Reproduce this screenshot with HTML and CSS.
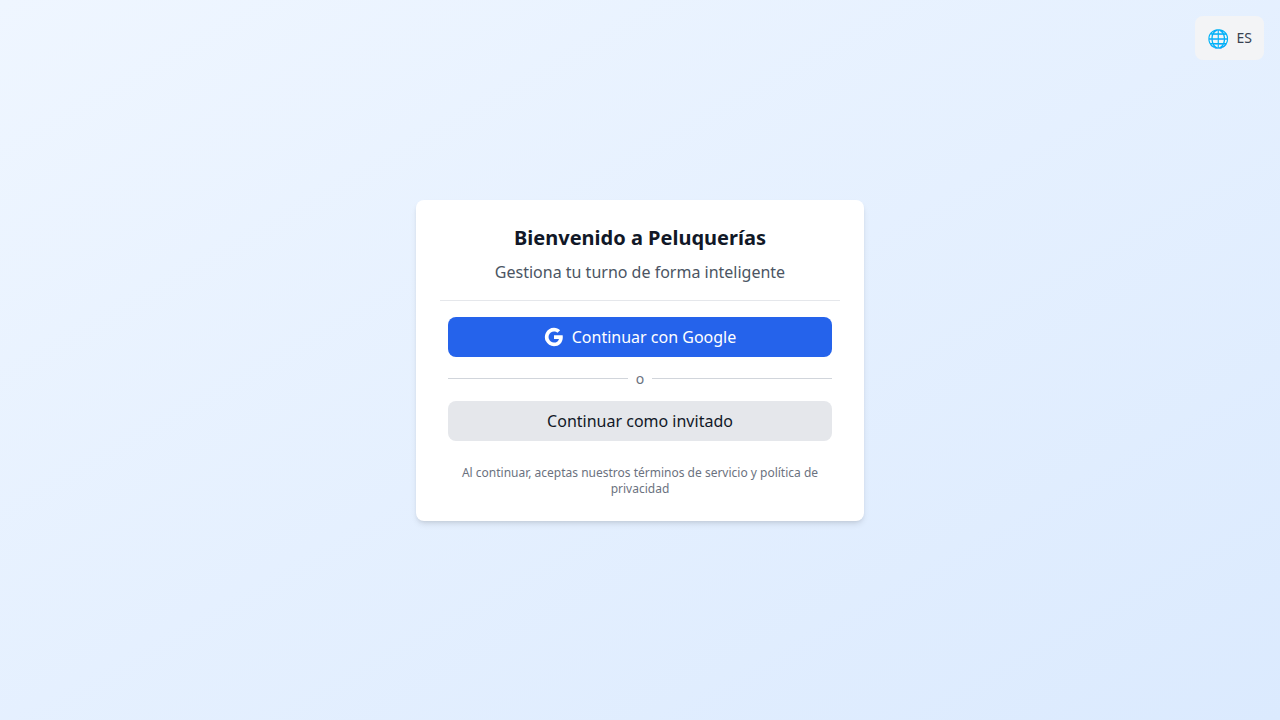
FILE: index.html
```html
<!DOCTYPE html>
<html lang="es">
<head>
<meta charset="utf-8">
<meta name="viewport" content="width=device-width, initial-scale=1">
<title>Peluquerías</title>
<link rel="stylesheet" href="styles.css">
</head>
<body>
<button class="language" type="button" aria-label="Idioma: ES"><span class="language-icon">🌐</span><span>ES</span></button>
<main class="page">
  <section class="card">
    <header class="card-header">
      <h1 class="title">Bienvenido a Peluquerías</h1>
      <p class="subtitle">Gestiona tu turno de forma inteligente</p>
    </header>
    <div class="actions">
      <button class="button button-primary" type="button">
        <svg class="google" viewBox="0 0 24 24" fill="currentColor" aria-hidden="true">
          <path d="M22.56 12.25c0-.78-.07-1.53-.2-2.25H12v4.26h5.92c-.26 1.37-1.04 2.53-2.21 3.31v2.77h3.57c2.08-1.92 3.28-4.74 3.28-8.09z"/>
          <path d="M12 23c2.97 0 5.46-.98 7.28-2.66l-3.57-2.77c-.98.66-2.23 1.06-3.71 1.06-2.86 0-5.29-1.93-6.16-4.53H2.18v2.84C3.99 20.53 7.7 23 12 23z"/>
          <path d="M5.84 14.09c-.22-.66-.35-1.36-.35-2.09s.13-1.43.35-2.09V7.07H2.18C1.43 8.55 1 10.22 1 12s.43 3.45 1.18 4.93l2.85-2.22.81-.62z"/>
          <path d="M12 5.38c1.62 0 3.06.56 4.21 1.64l3.15-3.15C17.45 2.09 14.97 1 12 1 7.7 1 3.99 3.47 2.18 7.07l3.66 2.84c.87-2.6 3.3-4.53 6.16-4.53z"/>
        </svg>
        <span>Continuar con Google</span>
      </button>
      <div class="divider"><span>o</span></div>
      <button class="button button-secondary" type="button">Continuar como invitado</button>
    </div>
    <p class="terms">Al continuar, aceptas nuestros términos de servicio y política de privacidad</p>
  </section>
</main>
</body>
</html>
```
FILE: styles.css
```css
* {
  box-sizing: border-box;
}

body {
  margin: 0;
  font-family: "Noto Sans", sans-serif;
  font-size: 16px;
  line-height: 24px;
  color: #111827;
}

h1,
p {
  margin: 0;
}

button {
  border: 0;
  font: inherit;
  cursor: pointer;
}

.page {
  display: flex;
  align-items: center;
  justify-content: center;
  min-height: 100vh;
  padding: 16px;
  background: linear-gradient(to bottom right, #eff6ff, #dbeafe);
}

.language {
  position: fixed;
  top: 16px;
  right: 16px;
  display: flex;
  align-items: center;
  gap: 8px;
  padding: 8px 12px;
  border-radius: 8px;
  background: #f3f4f6;
  color: #374151;
  font-size: 14px;
  line-height: 20px;
}

.language-icon {
  font-size: 18px;
  line-height: 28px;
}

.card {
  width: 100%;
  max-width: 448px;
  padding: 24px;
  border-radius: 8px;
  background: #fff;
  box-shadow: 0 4px 6px -1px rgb(0 0 0 / 10%), 0 2px 4px -2px rgb(0 0 0 / 10%);
  text-align: center;
}

.card-header {
  padding-bottom: 16px;
  border-bottom: 1px solid #e5e7eb;
}

.title {
  margin-bottom: 8px;
  font-size: 20px;
  line-height: 28px;
  font-weight: 700;
}

.subtitle {
  color: #4b5563;
}

.actions {
  display: flex;
  flex-direction: column;
  gap: 12px;
  padding: 16px 8px 0;
}

.button {
  display: flex;
  align-items: center;
  justify-content: center;
  gap: 8px;
  padding: 8px 16px;
  border-radius: 8px;
}

.button-primary {
  background: #2563eb;
  color: #fff;
}

.button-secondary {
  background: #e5e7eb;
  color: #111827;
}

.google {
  width: 20px;
  height: 20px;
}

.divider {
  display: flex;
  align-items: center;
  gap: 8px;
  color: #6b7280;
  font-size: 14px;
  line-height: 20px;
}

.divider::before,
.divider::after {
  content: "";
  flex: 1;
  height: 1px;
  background: #d1d5db;
}

.terms {
  padding: 24px 8px 0;
  color: #6b7280;
  font-size: 12px;
  line-height: 16px;
}
```
